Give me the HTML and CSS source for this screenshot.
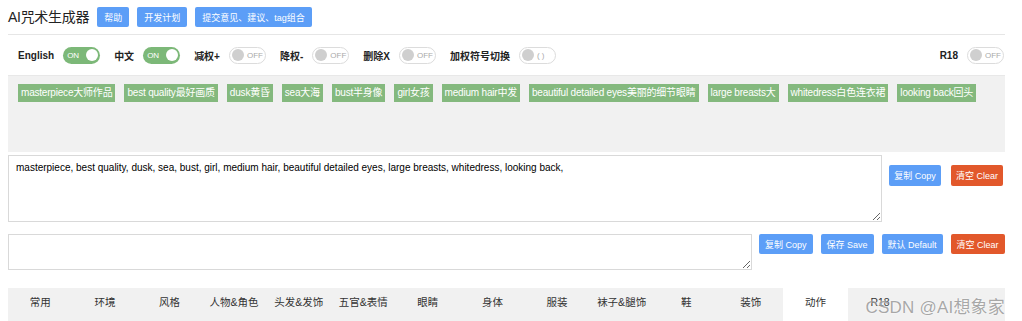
FILE: index.html
```html
<!DOCTYPE html>
<html lang="en">
<head>
    <meta charset="UTF-8">
    <title>AI咒术生成器</title>
    <link rel="stylesheet" href="styles.css">
</head>
<body>
    <div class="header">
        <h1>AI咒术生成器</h1>
        <button class="btn btn-blue">帮助</button>
        <button class="btn btn-blue">开发计划</button>
        <button class="btn btn-blue">提交意见、建议、tag组合</button>
    </div>

    <div class="switch-row">
        <span class="sw-label">English</span>
        <span class="switch on"><span class="sw-text">ON</span><span class="knob"></span></span>
        <span class="sw-label">中文</span>
        <span class="switch on"><span class="sw-text">ON</span><span class="knob"></span></span>
        <span class="sw-label">减权+</span>
        <span class="switch off"><span class="knob"></span><span class="sw-text">OFF</span></span>
        <span class="sw-label">降权-</span>
        <span class="switch off"><span class="knob"></span><span class="sw-text">OFF</span></span>
        <span class="sw-label">删除X</span>
        <span class="switch off"><span class="knob"></span><span class="sw-text">OFF</span></span>
        <span class="sw-label">加权符号切换</span>
        <span class="switch off"><span class="knob"></span><span class="sw-text">( )</span></span>
        <span class="spacer"></span>
        <span class="sw-label">R18</span>
        <span class="switch off"><span class="knob"></span><span class="sw-text">OFF</span></span>
    </div>

    <div class="tag-area">
        <span class="tag">masterpiece大师作品</span>
        <span class="tag">best quality最好画质</span>
        <span class="tag">dusk黄昏</span>
        <span class="tag">sea大海</span>
        <span class="tag">bust半身像</span>
        <span class="tag">girl女孩</span>
        <span class="tag">medium hair中发</span>
        <span class="tag">beautiful detailed eyes美丽的细节眼睛</span>
        <span class="tag">large breasts大</span>
        <span class="tag">whitedress白色连衣裙</span>
        <span class="tag">looking back回头</span>
    </div>

    <div class="out-row">
        <textarea class="out-box">masterpiece, best quality, dusk, sea, bust, girl, medium hair, beautiful detailed eyes, large breasts, whitedress, looking back,</textarea>
        <div class="out-btns">
            <button class="btn btn-blue">复制 Copy</button>
            <button class="btn btn-red">清空 Clear</button>
        </div>
    </div>

    <div class="neg-row">
        <textarea class="neg-box"></textarea>
        <div class="neg-btns">
            <button class="btn btn-blue">复制 Copy</button>
            <button class="btn btn-blue">保存 Save</button>
            <button class="btn btn-blue">默认 Default</button>
            <button class="btn btn-red">清空 Clear</button>
        </div>
    </div>

    <div class="tabs">
        <div class="tab">常用</div>
        <div class="tab">环境</div>
        <div class="tab">风格</div>
        <div class="tab">人物&amp;角色</div>
        <div class="tab">头发&amp;发饰</div>
        <div class="tab">五官&amp;表情</div>
        <div class="tab">眼睛</div>
        <div class="tab">身体</div>
        <div class="tab">服装</div>
        <div class="tab">袜子&amp;腿饰</div>
        <div class="tab">鞋</div>
        <div class="tab">装饰</div>
        <div class="tab active">动作</div>
        <div class="tab">R18</div>
    </div>

    <div class="watermark">CSDN @AI想象家</div>
</body>
</html>
```

FILE: styles.css
```css
body {
    margin: 0;
    padding: 0 17px 0 8px;
    font-family: "Liberation Sans", "Noto Sans CJK SC", sans-serif;
    color: #222;
    background: #fff;
    position: relative;
    overflow: hidden;
    height: 321px;
}

.header {
    display: flex;
    align-items: center;
    gap: 8px;
    height: 34px;
    border-bottom: 1px solid #e6e6e6;
}

h1 {
    margin: 0;
    font-size: 14px;
    font-weight: normal;
    color: #222;
    line-height: 20px;
    letter-spacing: -0.3px;
}

.btn {
    border: none;
    border-radius: 2px;
    color: #fff;
    font-family: inherit;
    font-size: 9px;
    padding: 0 7px;
    height: 20px;
    cursor: pointer;
}

.btn-blue {
    background-color: #5c9ef7;
}

.btn-red {
    background-color: #e2582b;
}

.switch-row {
    display: flex;
    align-items: center;
    height: 40px;
    padding-left: 10px;
}

.sw-label {
    font-size: 10px;
    font-weight: bold;
    margin-right: 9px;
}

.spacer {
    flex: 1;
}

.switch {
    display: inline-flex;
    align-items: center;
    box-sizing: border-box;
    width: 37px;
    height: 17px;
    border-radius: 9px;
    padding: 0 2px 0 4px;
    margin-right: 14px;
    font-size: 8px;
}

.switch.on {
    background-color: #7cb878;
    color: #fff;
    justify-content: space-between;
}

.switch.on .knob {
    background: #fff;
}

.switch.off {
    border: 1px solid #dcdcdc;
    background: #fff;
    color: #aaa;
    padding: 0 2px;
    gap: 3px;
}

.switch.off .knob {
    background: #cfcfcf;
}

.switch:last-child {
    margin-right: 1px;
}

.knob {
    width: 12px;
    height: 12px;
    border-radius: 50%;
    flex-shrink: 0;
}

.tag-area {
    display: flex;
    flex-wrap: wrap;
    align-content: flex-start;
    gap: 8px 9px;
    height: 77px;
    box-sizing: border-box;
    padding: 8px 10px;
    background: #f1f1f1;
    border-top: 1px solid #e8e8e8;
}

.tag {
    background-color: #84b97e;
    color: #fff;
    font-size: 10px;
    height: 18px;
    line-height: 18px;
    padding: 0 3px;
    letter-spacing: -0.2px;
}

.out-row {
    display: flex;
    gap: 7px;
    margin-top: 3px;
}

.out-box {
    width: 874px;
    height: 67px;
    box-sizing: border-box;
    border: 1px solid #d9d9d9;
    padding: 6px 7px;
    font-family: inherit;
    font-size: 10px;
    resize: vertical;
    margin: 0;
}

.out-btns {
    display: flex;
    gap: 10px;
    padding-top: 10px;
    align-items: flex-start;
}

.out-btns .btn {
    width: 52px;
    height: 21px;
    padding: 0;
}

.neg-row {
    display: flex;
    gap: 7px;
    margin-top: 12px;
}

.neg-box {
    width: 744px;
    height: 36px;
    box-sizing: border-box;
    border: 1px solid #d9d9d9;
    margin: 0;
    resize: vertical;
}

.neg-btns {
    display: flex;
    gap: 8px;
    align-items: flex-start;
}

.neg-btns .btn {
    padding: 0 6px;
    height: 20px;
}

.tabs {
    display: flex;
    margin-top: 18px;
    height: 40px;
    background: #f1f1f1;
}

.tab {
    width: 64.6px;
    text-align: center;
    font-size: 10.5px;
    line-height: 28px;
    color: #333;
}

.tab.active {
    background: #fff;
}

.watermark {
    position: absolute;
    right: 17px;
    top: 293px;
    font-size: 17px;
    color: rgba(140, 140, 140, 0.75);
    text-shadow: 0 0 2px #fff;
    letter-spacing: 0.2px;
}
```
